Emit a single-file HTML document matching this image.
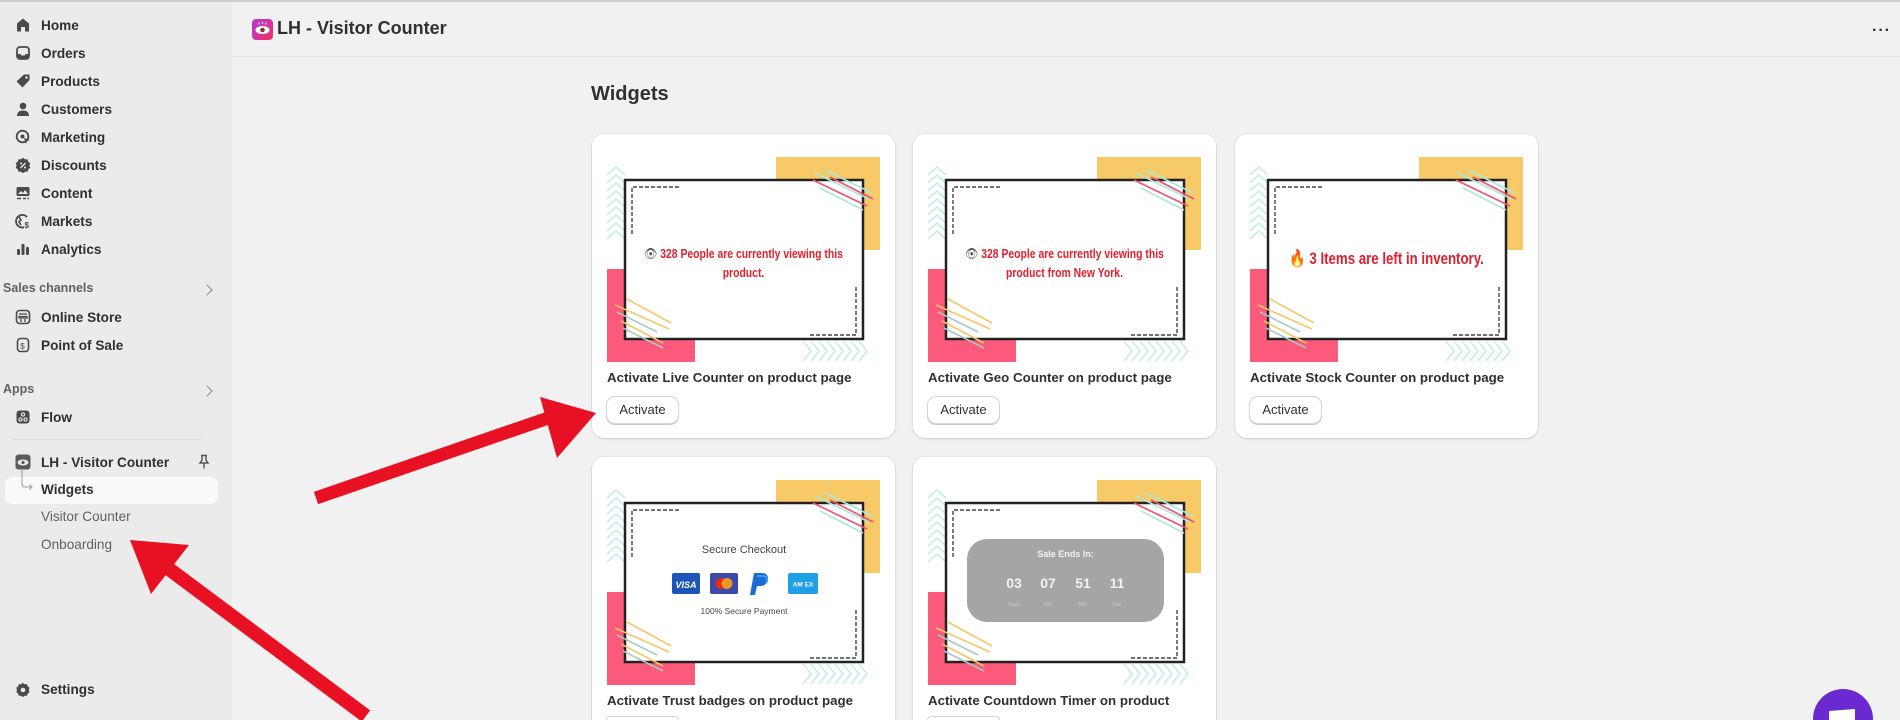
<!DOCTYPE html>
<html><head><meta charset="utf-8">
<style>
*{margin:0;padding:0;box-sizing:border-box}
html,body{width:1900px;height:720px;overflow:hidden}
body{background:#f1f1f1;font-family:"Liberation Sans",Arial,sans-serif;color:#303030}
#wrap{position:relative;width:1900px;height:720px;overflow:hidden;background:#f1f1f1}
.abs{position:absolute}
#side{left:0;top:0;width:232px;height:720px;background:#ebebeb}
.nav{position:absolute;left:41px;font-size:13.6px;font-weight:bold;color:#303030;line-height:18px}
.ico{position:absolute;left:15px;width:16px;height:16px}
.sec{position:absolute;left:3px;font-size:12.5px;color:#616161;font-weight:bold}
.chev{position:absolute;left:203px;width:8px;height:8px;border-right:1.6px solid #8a8a8a;border-top:1.6px solid #8a8a8a;transform:rotate(45deg)}
.sub{position:absolute;left:41px;font-size:13.6px;color:#616161}
#top{left:232px;top:0;width:1668px;height:57px;border-bottom:1px solid #e3e3e3;background:#f1f1f1}
.card{position:absolute;width:303px;background:#fff;border-radius:12px;box-shadow:0 1px 2px rgba(0,0,0,.12),0 0 0 1px rgba(0,0,0,.04);overflow:hidden}
.card.b{border-radius:12px 12px 0 0}
.img{position:absolute;left:15px;top:23px;width:273px;height:205px}
.ct{position:absolute;left:15px;top:236px;font-size:13.3px;font-weight:bold;color:#303030;white-space:nowrap}
.btn{position:absolute;left:15px;top:263px;width:71px;height:26px;border-radius:8px;background:#fff;box-shadow:0 0 0 1px #d4d4d4,0 1px 0 1px #c9c9c9;font-size:13px;text-align:center;line-height:26px;color:#303030}
.msg{position:absolute;left:-20px;width:343px;text-align:center;color:#e0202e;font-weight:bold;font-size:13px;line-height:19px;transform:scaleX(.8);white-space:nowrap}
.eye{color:#555;font-weight:normal}
</style></head><body><div id="wrap">
<svg width="0" height="0" style="position:absolute">
<defs>
<symbol id="deco" viewBox="0 0 273 205">
<path d="M169 0H273V93H218A49 49 0 0 1 169 44Z" fill="#f8c967"/>
<path d="M0 112H38A50 50 0 0 1 88 162V205H0Z" fill="#fc5a7a"/>
<g fill="none" stroke="#b5ece0" stroke-width="1.3">
<polyline points="0,18 9,10 18,18"/><polyline points="0,26 9,18 18,26"/><polyline points="0,34 9,26 18,34"/><polyline points="0,42 9,34 18,42"/><polyline points="0,50 9,42 18,50"/><polyline points="0,58 9,50 18,58"/><polyline points="0,66 9,58 18,66"/><polyline points="0,74 9,66 18,74"/><polyline points="0,82 9,74 18,82"/>
<polyline points="196,184 204,194 196,204"/><polyline points="204,184 212,194 204,204"/><polyline points="212,184 220,194 212,204"/><polyline points="220,184 228,194 220,204"/><polyline points="228,184 236,194 228,204"/><polyline points="236,184 244,194 236,204"/><polyline points="244,184 252,194 244,204"/><polyline points="252,184 260,194 252,204"/>
</g>
<rect x="18" y="23" width="238" height="159" fill="#fff" stroke="#222" stroke-width="2.5"/>
<g fill="none" stroke="#444" stroke-width="1.4" stroke-dasharray="4 2">
<path d="M72 30H25V77"/><path d="M203 178H249V128"/>
</g>
<g stroke-width="1.6">
<line x1="208" y1="16" x2="262" y2="42" stroke="#a9e8da"/><line x1="218" y1="13" x2="265" y2="36" stroke="#a9e8da"/>
<line x1="206" y1="23" x2="260" y2="49" stroke="#f0506e"/><line x1="223" y1="20" x2="266" y2="42" stroke="#f0506e"/>
<line x1="213" y1="31" x2="256" y2="53" stroke="#a9e8da"/>
<line x1="8" y1="148" x2="62" y2="172" stroke="#f6c667"/><line x1="20" y1="142" x2="64" y2="166" stroke="#f6c667"/>
<line x1="10" y1="155" x2="50" y2="175" stroke="#a9c8c4"/><line x1="14" y1="164" x2="56" y2="186" stroke="#f6c667"/>
<line x1="16" y1="171" x2="56" y2="191" stroke="#a9c8c4"/>
</g>
</symbol>
</defs></svg>

<div class="abs" style="left:0;top:0;width:1900px;height:2px;background:#cfcfcf;z-index:5"></div>

<div id="side" class="abs">
<svg class="ico" style="top:17px" viewBox="0 0 16 16"><path d="M8 1.5L2 6.5V14.5H6V10H10V14.5H14V6.5Z" fill="#4a4a4a"/></svg>
<svg class="ico" style="top:45px" viewBox="0 0 16 16"><rect x="2" y="2" width="12" height="12" rx="3" fill="none" stroke="#4a4a4a" stroke-width="1.8"/><path d="M2 9H5.5L6.5 10.5H9.5L10.5 9H14V12A2 2 0 0 1 12 14H4A2 2 0 0 1 2 12Z" fill="#4a4a4a"/></svg>
<svg class="ico" style="top:73px" viewBox="0 0 16 16"><path d="M9 1.5H14.5V7L7.5 14.5L1.5 8.5Z" fill="#4a4a4a"/><circle cx="11.5" cy="4.5" r="1.2" fill="#ebebeb"/></svg>
<svg class="ico" style="top:101px" viewBox="0 0 16 16"><circle cx="8" cy="5" r="3.3" fill="#4a4a4a"/><path d="M2 15C2 11 4.5 9.5 8 9.5S14 11 14 15Z" fill="#4a4a4a"/></svg>
<svg class="ico" style="top:129px" viewBox="0 0 16 16"><circle cx="7.5" cy="7.5" r="5.8" fill="none" stroke="#4a4a4a" stroke-width="1.8"/><circle cx="7.5" cy="7.5" r="2" fill="#4a4a4a"/><path d="M9 9L15 11L12 12L11 15Z" fill="#4a4a4a"/></svg>
<svg class="ico" style="top:157px" viewBox="0 0 16 16"><path d="M8 .8L10 2.3L12.5 2.2L13.2 4.6L15.2 6.1L14.4 8.5L15.2 10.9L13.2 12.4L12.5 14.8L10 14.7L8 16.2L6 14.7L3.5 14.8L2.8 12.4L.8 10.9L1.6 8.5L.8 6.1L2.8 4.6L3.5 2.2L6 2.3Z" fill="#4a4a4a"/><path d="M5.5 11L10.5 6" stroke="#ebebeb" stroke-width="1.4"/><circle cx="6" cy="6.5" r="1" fill="#ebebeb"/><circle cx="10" cy="10.5" r="1" fill="#ebebeb"/></svg>
<svg class="ico" style="top:185px" viewBox="0 0 16 16"><rect x="1.5" y="2" width="13" height="9" rx="1.5" fill="#4a4a4a"/><path d="M3 9L6 6L8 8L10 5L13 9Z" fill="#ebebeb"/><path d="M2 13.5H6M8 13.5H11M12.5 13.5H14" stroke="#4a4a4a" stroke-width="1.5"/></svg>
<svg class="ico" style="top:213px" viewBox="0 0 16 16"><path d="M12 4A6.3 6.3 0 1 0 9 14.3" fill="none" stroke="#4a4a4a" stroke-width="1.8"/><path d="M4 4L6 7L4 9L6 12" stroke="#4a4a4a" stroke-width="1.6" fill="none"/><text x="9.5" y="15" font-size="8" font-weight="bold" fill="#4a4a4a" font-family="Liberation Sans">$</text></svg>
<svg class="ico" style="top:241px" viewBox="0 0 16 16"><rect x="2" y="8" width="3" height="6" rx="1" fill="#4a4a4a"/><rect x="6.5" y="3" width="3" height="11" rx="1" fill="#4a4a4a"/><rect x="11" y="6" width="3" height="8" rx="1" fill="#4a4a4a"/></svg>

<div class="nav" style="top:17px">Home</div>
<div class="nav" style="top:45px">Orders</div>
<div class="nav" style="top:73px">Products</div>
<div class="nav" style="top:101px">Customers</div>
<div class="nav" style="top:129px">Marketing</div>
<div class="nav" style="top:157px">Discounts</div>
<div class="nav" style="top:185px">Content</div>
<div class="nav" style="top:213px">Markets</div>
<div class="nav" style="top:241px">Analytics</div>

<div class="sec" style="top:281px">Sales channels</div><div class="chev" style="top:286px"></div>
<svg class="ico" style="top:309px" viewBox="0 0 16 16"><rect x="1.5" y="1.5" width="13" height="13" rx="3" fill="none" stroke="#4a4a4a" stroke-width="1.6"/><path d="M4 5H12M4 7.5H12V9H4Z M6 10V13M10 10V13" stroke="#4a4a4a" stroke-width="1.3" fill="none"/></svg>
<div class="nav" style="top:309px">Online Store</div>
<svg class="ico" style="top:337px" viewBox="0 0 16 16"><rect x="2.5" y="1.5" width="11" height="13" rx="3" fill="none" stroke="#4a4a4a" stroke-width="1.6"/><text x="5.3" y="12" font-size="8" fill="#4a4a4a" font-family="Liberation Sans">$</text></svg>
<div class="nav" style="top:337px">Point of Sale</div>

<div class="sec" style="top:382px">Apps</div><div class="chev" style="top:387px"></div>
<svg class="ico" style="top:409px" viewBox="0 0 16 16"><rect x="1.5" y="1.5" width="13" height="13" rx="3" fill="#4a4a4a"/><circle cx="8" cy="5.5" r="1.6" fill="none" stroke="#ebebeb" stroke-width="1.1"/><circle cx="5.5" cy="10.5" r="1.6" fill="none" stroke="#ebebeb" stroke-width="1.1"/><circle cx="10.5" cy="10.5" r="1.6" fill="none" stroke="#ebebeb" stroke-width="1.1"/></svg>
<div class="nav" style="top:409px">Flow</div>

<div class="abs" style="left:13px;top:439px;width:188px;height:1px;background:#dcdcdc"></div>

<svg class="ico" style="top:454px" viewBox="0 0 16 16"><rect x="0.5" y="0.5" width="15" height="15" rx="3" fill="#5a5a5a"/><ellipse cx="8" cy="8.5" rx="5.5" ry="3" fill="#ebebeb"/><circle cx="8" cy="8.5" r="1.6" fill="#5a5a5a"/></svg>
<div class="nav" style="top:454px">LH - Visitor Counter</div>
<svg class="abs" style="left:198px;top:454px" width="12" height="16" viewBox="0 0 12 16"><path d="M3 1.5H9M4 1.5V6L2 9H10L8 6V1.5M6 9V14.5" fill="none" stroke="#555" stroke-width="1.4"/></svg>
<div class="abs" style="left:5px;top:477px;width:213px;height:27px;background:#fafafa;border-radius:8px"></div>
<svg class="abs" style="left:20px;top:470px" width="14" height="22" viewBox="0 0 14 22"><path d="M2 0V14Q2 17 5 17H12M9.5 14.5L12 17L9.5 19.5" fill="none" stroke="#9a9a9a" stroke-width="1"/></svg>
<div class="nav" style="top:481px">Widgets</div>
<div class="sub" style="top:509px">Visitor Counter</div>
<div class="sub" style="top:537px">Onboarding</div>

<svg class="ico" style="top:682px" viewBox="0 0 16 16"><path d="M8 .8L10 2.3L12.5 2.2L13.2 4.6L15.2 6.1L14.4 8.5L15.2 10.9L13.2 12.4L12.5 14.8L10 14.7L8 16.2L6 14.7L3.5 14.8L2.8 12.4L.8 10.9L1.6 8.5L.8 6.1L2.8 4.6L3.5 2.2L6 2.3Z" fill="#4a4a4a" transform="scale(.92) translate(.6 .2)"/><circle cx="8" cy="8" r="2.3" fill="#ebebeb"/></svg>
<div class="nav" style="top:681px">Settings</div>
</div>

<div id="top" class="abs">
<svg class="abs" style="left:20px;top:19px" width="21" height="21" viewBox="0 0 21 21"><defs><linearGradient id="g1" x1="0" y1="0" x2="1" y2="1"><stop offset="0" stop-color="#b23bd6"/><stop offset="1" stop-color="#f0306a"/></linearGradient></defs><rect width="21" height="21" rx="4" fill="url(#g1)"/><ellipse cx="10.5" cy="11" rx="7" ry="4" fill="#fff"/><circle cx="10.5" cy="11" r="2.3" fill="#7a3a20"/><path d="M7 5.5V3.5M10.5 5V3M14 5.5V3.5" stroke="#fff" stroke-width="1"/></svg>
<div class="abs" style="left:45px;top:18px;font-size:18px;font-weight:bold;color:#303030">LH - Visitor Counter</div>
<div class="abs" style="left:1640px;top:22px;font-size:16px;font-weight:bold;letter-spacing:1px;color:#303030">&middot;&middot;&middot;</div>
</div>

<div class="abs" style="left:591px;top:83px;font-size:20px;font-weight:bold;color:#303030">Widgets</div>

<div class="card" style="left:592px;top:134px;height:304px">
<svg class="img"><use href="#deco"/></svg>
<div class="msg" style="top:110px"><span class="eye">👁</span> 328 People are currently viewing this<br>product.</div>
<div class="ct">Activate Live Counter on product page</div>
<div class="btn">Activate</div>
</div>
<div class="card" style="left:913px;top:134px;height:304px">
<svg class="img"><use href="#deco"/></svg>
<div class="msg" style="top:110px"><span class="eye">👁</span> 328 People are currently viewing this<br>product from New York.</div>
<div class="ct">Activate Geo Counter on product page</div>
<div class="btn">Activate</div>
</div>
<div class="card" style="left:1235px;top:134px;height:304px">
<svg class="img"><use href="#deco"/></svg>
<div class="msg" style="top:115px;font-size:17px;transform:scaleX(.78)">🔥 3 Items are left in inventory.</div>
<div class="ct">Activate Stock Counter on product page</div>
<div class="btn">Activate</div>
</div>
<div class="card b" style="left:592px;top:457px;height:263px">
<svg class="img"><use href="#deco"/></svg>
<div class="abs" style="left:33px;top:87px;width:238px;text-align:center;font-size:11px;color:#444">Secure Checkout</div>
<svg class="abs" style="left:80px;top:116px" width="150" height="24" viewBox="0 0 150 24">
<rect x="0" y="0" width="28" height="21" rx="2" fill="#1a56b8"/><text x="14" y="15" text-anchor="middle" font-size="9" font-weight="bold" font-style="italic" fill="#fff" font-family="Liberation Sans">VISA</text>
<rect x="38" y="0" width="28" height="21" rx="2" fill="#3b4aa8"/><circle cx="49" cy="10.5" r="5.5" fill="#eb2a1e"/><circle cx="55" cy="10.5" r="5.5" fill="#f7a11a" opacity=".9"/>
<path d="M82 0H90C96 0 97 5 95 9C93 13 90 13 87 13H85L83 22H78Z" fill="#1c6bd3"/><path d="M85 3H91C95 3 96 7 94 10" fill="none" stroke="#2fa0e8" stroke-width="2"/>
<rect x="116" y="0" width="30" height="21" rx="2" fill="#1fa0e6"/><text x="131" y="13.5" text-anchor="middle" font-size="6.5" font-weight="bold" fill="#fff" font-family="Liberation Sans">AM EX</text>
</svg>
<div class="abs" style="left:33px;top:149px;width:238px;text-align:center;font-size:8.5px;color:#444">100% Secure Payment</div>
<div class="ct">Activate Trust badges on product page</div>
<div class="abs" style="left:15px;top:260px;width:71px;height:3px;border-radius:8px 8px 0 0;box-shadow:0 0 0 1px #d4d4d4"></div>
</div>
<div class="card b" style="left:913px;top:457px;height:263px">
<svg class="img"><use href="#deco"/></svg>
<div class="abs" style="left:54px;top:82px;width:197px;height:83px;background:#a5a5a5;border-radius:20px;color:#f2f2f2;text-align:center">
<div style="position:absolute;top:10px;width:100%;font-size:9px;font-weight:bold">Sale Ends In:</div>
<div style="position:absolute;left:27px;top:36px;width:40px;font-size:14px;font-weight:bold;text-align:center">03</div>
<div style="position:absolute;left:61px;top:36px;width:40px;font-size:14px;font-weight:bold;text-align:center">07</div>
<div style="position:absolute;left:96px;top:36px;width:40px;font-size:14px;font-weight:bold;text-align:center">51</div>
<div style="position:absolute;left:130px;top:36px;width:40px;font-size:14px;font-weight:bold;text-align:center">11</div>
<div style="position:absolute;left:27px;top:63px;width:40px;font-size:5.5px;text-align:center;color:#c8c8c8">Days</div>
<div style="position:absolute;left:61px;top:63px;width:40px;font-size:5.5px;text-align:center;color:#c8c8c8">Hrs</div>
<div style="position:absolute;left:96px;top:63px;width:40px;font-size:5.5px;text-align:center;color:#c8c8c8">Min</div>
<div style="position:absolute;left:130px;top:63px;width:40px;font-size:5.5px;text-align:center;color:#c8c8c8">Sec</div>
</div>
<div class="ct">Activate Countdown Timer on product</div>
<div class="abs" style="left:15px;top:260px;width:71px;height:3px;border-radius:8px 8px 0 0;box-shadow:0 0 0 1px #d4d4d4"></div>
</div>

<svg class="abs" style="left:0;top:0;z-index:10" width="1900" height="720" viewBox="0 0 1900 720">
<line x1="316" y1="498" x2="560" y2="414" stroke="#e81123" stroke-width="13"/>
<polygon points="596,413 540,397 557,458" fill="#e81123"/>
<line x1="366" y1="716" x2="165" y2="566" stroke="#e81123" stroke-width="14"/>
<polygon points="130,540 151,594 189,545" fill="#e81123"/>
</svg>

<svg class="abs" style="left:1813px;top:689px" width="60" height="31" viewBox="0 0 60 31">
<circle cx="30" cy="30" r="30" fill="#6a2ad0"/>
<path d="M16 22L42 20V31H16Z" fill="#fff"/>
</svg>
</div></body></html>
